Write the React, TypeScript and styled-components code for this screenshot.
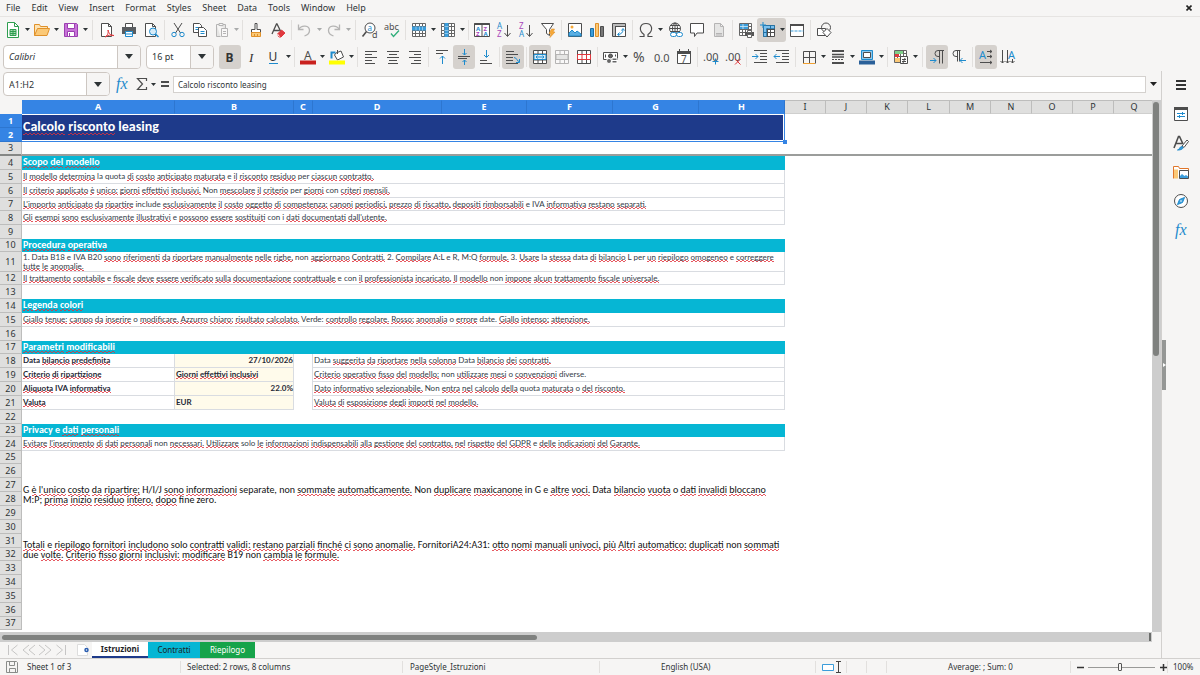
import React, { ReactNode } from "react";
import styled, { createGlobalStyle, css } from "styled-components";

const ui = '"Noto Sans", "Open Sans", sans-serif';
const cellFont = 'Lato, "Open Sans", sans-serif';
const noteFont = 'Carlito, Calibri, Lato, sans-serif';
const K = "#4d4d4d";
const B = "#1e8bcd";
const chrome = "#f6f5f4";

const Global = createGlobalStyle`
  * { box-sizing: border-box; }
  body { margin: 0; background: ${chrome}; color: #2e3436; font-family: ${ui}; font-size: 8px; }
  button, input, select { font: inherit; color: inherit; margin: 0; padding: 0; border: 0; background: none; }
`;

const Window_ = styled.div`display: flex; flex-direction: column; min-height: 100vh;`;

/* ---------- menu ---------- */
const MenuBar = styled.nav`
  display: flex; align-items: center; gap: 11px; height: 17px; padding: 0 6px;
  border-bottom: 1px solid #e6e4e2; font-size: 9px; line-height: 16px;
`;
const CloseDoc = styled.button`margin-left: auto; width: 10px; height: 16px; display: grid; place-items: center;`;

/* ---------- toolbars ---------- */
const Toolbar = styled.div<{ $inset: number }>`display: flex; align-items: center; height: 27px; padding: 0 2px 2px ${p => p.$inset}px;`;
const Tool = styled.button<{ $on?: boolean; $off?: boolean; $split?: boolean }>`
  display: flex; align-items: center; justify-content: flex-start; flex: none;
  width: ${p => (p.$split ? 29 : 22)}px; height: 24px; padding-left: 3px; border-radius: 3px;
  ${p => p.$on && css`background: #d5d1cd;`}
  ${p => p.$off && css`opacity: .38;`}
`;
const Sep = styled.i<{ $wide?: boolean }>`flex: none; width: ${p => (p.$wide ? 7 : 5)}px; height: 20px;
  background: linear-gradient(#e2e0de, #e2e0de) center / 1px 100% no-repeat;`;
const Caret = styled.svg<{ $flush?: boolean }>`flex: none; width: 5px; height: 3px; margin-left: ${p => (p.$flush ? 0 : 4)}px;`;
const Svg = styled.svg`flex: none; width: 16px; height: 16px; fill: none; stroke: ${K}; stroke-width: 1; overflow: visible;
  text { stroke: none; font-family: ${ui}; }`;

const Combo = styled.label<{ $w: number; $italic?: boolean }>`
  display: grid; grid-template-columns: 1fr 23px; flex: none; width: ${p => p.$w}px; height: 24px;
  border: 1px solid #cdc7c2; border-radius: 4px; background: #fff; overflow: hidden;
  select { grid-area: 1 / 1 / 2 / 3; appearance: none; padding-left: 5px; font-size: 9px; outline: 0;
    font-style: ${p => (p.$italic ? "italic" : "normal")}; }
  span { grid-area: 1 / 2; display: grid; place-items: center; background: ${chrome};
    border-left: 1px solid #cdc7c2; pointer-events: none; }
`;
const ComboGap = styled.i`flex: none; width: 5px;`;

const Body = styled.div`display: flex; flex: 1;`;
const Main = styled.main`flex: 1; min-width: 0; display: flex; flex-direction: column;`;

const FormulaBar = styled.div`display: flex; align-items: center; height: 29px; padding: 0 1px 3px 3px;`;
const FormulaTool = styled.button<{ $w: number }>`width: ${p => p.$w}px; height: 20px; display: grid; place-items: center; flex: none;`;
const FormulaInput = styled.input`
  flex: 1; min-width: 0; height: 17px; border: 1px solid #d4d1ce; background: #fff; padding: 0 4px; outline: 0;
`;

/* ---------- sheet ---------- */
const SheetPane = styled.div`display: flex; flex: 1;`;
const SheetArea = styled.div`flex: 1; min-width: 0; background: #fff; overflow: hidden;`;
const Sheet = styled.table`
  width: calc(100% + 3px); table-layout: fixed; border-collapse: separate; border-spacing: 0; font-size: 8px;
`;
const Corner = styled.td`padding: 0; background: ${chrome};`;
const ColHead = styled.th<{ $on?: boolean }>`
  height: 14px; padding: 0; font-size: 9px; line-height: 12px; font-weight: ${p => (p.$on ? 700 : 400)};
  color: ${p => (p.$on ? "#fff" : "#2e3436")}; background: ${p => (p.$on ? "#3584e4" : "#dfdfde")};
  border-right: 1px solid ${p => (p.$on ? "#2d76d0" : "#bdbdbc")};
  border-top: 1px solid ${p => (p.$on ? "#3584e4" : "#bdbdbc")};
  border-bottom: 1px solid ${p => (p.$on ? "#3584e4" : "#cfcfce")};
`;
const Row = styled.tr<{ $h: number }>`height: ${p => p.$h}px;`;
const RowHead = styled.th<{ $on?: boolean; $frozen?: boolean }>`
  padding: 0; font-size: 9px; line-height: 10px; font-weight: ${p => (p.$on ? 700 : 400)};
  color: ${p => (p.$on ? "#fff" : "#2e3436")}; background: ${p => (p.$on ? "#3584e4" : "#dfdfde")};
  border-right: 1px solid ${p => (p.$on ? "#3584e4" : "#bdbdbc")};
  border-bottom: ${p => (p.$frozen ? "2px solid #858785" : p.$on ? "1px solid #2d76d0" : "1px solid #bdbdbc")};
`;
const Cell = styled.td<{ $kind?: string }>`
  padding: 0 1px; vertical-align: top; line-height: 12px; font-family: ${cellFont}; white-space: nowrap; color: #333c48;
  ${p => p.$kind === "frozen" && css`border-bottom: 2px solid #9b9d9b;`}
  ${p => p.$kind === "section" && css`background: #06b6d4; color: #fff; font-weight: 700; font-family: ${noteFont}; font-size: 10px;`}
  ${p => p.$kind === "text" && css`border-bottom: 1px solid #d9dce1; border-right: 1px solid #d9dce1;`}
  ${p => p.$kind === "wrap" && css`border-bottom: 1px solid #d9dce1; border-right: 1px solid #d9dce1; white-space: normal; line-height: 9px; padding-top: 1px;`}
  ${p => p.$kind === "label" && css`border-bottom: 1px solid #d9dce1; border-right: 1px solid #d9dce1; font-weight: 700; color: #1f2937;`}
  ${p => (p.$kind === "value" || p.$kind === "number") && css`border-bottom: 1px solid #d9dce1; border-right: 1px solid #d9dce1; font-weight: 700; background: #fffbeb; color: #1f2937;`}
  ${p => p.$kind === "number" && css`text-align: right; padding-right: 0;`}
  ${p => p.$kind === "gap" && css`border-right: 1px solid #d9dce1;`}
  ${p => p.$kind === "note" && css`font-family: ${noteFont}; font-size: 10px; line-height: 10px; white-space: normal; vertical-align: bottom; padding-bottom: 1px; color: #111;`}
`;
const TitleCell = styled.td`
  position: relative; padding: 0 1px 2px; vertical-align: middle; background: #1e3a8a; color: #fff;
  font: 700 14px/18px ${noteFont};
  box-shadow: inset 0 -1px #3584e4, inset -1px 0 #3584e4, inset 0 -2px #fff, inset -2px 0 #fff, inset 0 1px #fff;
  &::after { content: ""; position: absolute; right: -2px; bottom: -2px; width: 4px; height: 4px; background: #3584e4; }
`;
/* Two staggered rows of dashes make a low zigzag under each flagged word. */
const Misspelt = styled.span`
  background:
    linear-gradient(90deg, #e0303acc 2px, transparent 2px) 0 100% / 4px 1px repeat-x,
    linear-gradient(90deg, transparent 2px, #e0303acc 2px) 0 calc(100% - 1px) / 4px 1px repeat-x;
`;

const VScroll = styled.div`flex: none; width: 9px; background: #cdcdcd; padding: 2px 2px 0 1px;
  i { display: block; height: 48%; border-radius: 3px; background: #7f817f; }`;
const HScroll = styled.div`display: flex; align-items: center; height: 10px; margin-right: 9px; background: #cdcdcd; padding: 0 1px 0 2px;
  i { width: 46.6%; height: 5px; border-radius: 3px; background: #7f817f; }
  b { width: 2px; height: 8px; margin-left: auto; background: #6b6d6b; }`;

/* ---------- tabs ---------- */
const Tabs = styled.div`display: flex; height: 16px;`;
const TabNav = styled.div`display: flex; align-items: center; width: 74px; padding-left: 5px; opacity: .28;
  button { height: 16px; display: grid; }`;
const AddSheet = styled.button`display: grid; place-items: center; width: 18px;`;
const Tab = styled.button<{ $bg: string; $w: number; $ink?: string; $active?: boolean }>`
  width: ${p => p.$w}px; background: ${p => p.$bg}; color: ${p => p.$ink || "#1d2226"}; line-height: 14px; padding-bottom: 1px;
  ${p => p.$active && css`font-weight: 700; border-bottom: 2px solid #1e3a8a; padding-bottom: 0;`}
`;

/* ---------- sidebar ---------- */
const Sidebar = styled.aside`flex: none; display: flex; width: 39px; border-left: 1px solid #d2d0ce;`;
const Grip = styled.button`align-self: center; width: 4px; height: 50px; background: #959795; display: grid; place-items: center;`;
const Deck = styled.div`display: flex; flex-direction: column; gap: 5px; padding: 2px 0 0 3px;
  button { width: 24px; height: 24px; display: grid; place-items: center; }`;

/* ---------- status ---------- */
const Status = styled.footer`display: grid; align-items: center; height: 17px; border-top: 1px solid #d2d0ce;
  grid-template-columns:
    minmax(0, 181fr) minmax(0, 222fr) minmax(0, 197fr) minmax(0, 216fr) minmax(0, 31fr)
    minmax(0, 20fr) minmax(0, 20fr) minmax(0, 184fr) minmax(0, 97fr) minmax(0, 32fr);`;
const Field = styled.div<{ $pad?: number; $center?: boolean }>`
  display: flex; align-items: center; height: 12px; line-height: 12px; white-space: nowrap; border-right: 1px solid #e2e0de;
  padding-left: ${p => p.$pad || 0}px; ${p => p.$center && css`justify-content: center; padding: 0 0 0 4px;`}
  &:last-child { border: 0; }
`;
const SheetCount = styled.span`margin-left: 7px;`;
const Zoom = styled.input`
  appearance: none; flex: 1; min-width: 0; height: 9px; margin: 0 4px; outline: 0;
  background: linear-gradient(#9a9a98, #9a9a98) center / 100% 1px no-repeat;
  &::-webkit-slider-thumb { appearance: none; width: 4px; height: 8px; border: 1px solid #555; background: ${chrome}; border-radius: 1px; }
`;
const ZoomButton = styled.button`width: 8px; height: 12px; display: grid; place-items: center;`;

/* ---------- icons ---------- */
const grid = (x: number, y: number, w: number, h: number, c = 4, r = 4) => {
  let d = `M${x} ${y}h${w}v${h}h${-w}z`;
  for (let i = 1; i < c; i++) d += `M${Math.round(x + (w * i) / c - 0.5) + 0.5} ${y}v${h}`;
  for (let i = 1; i < r; i++) d += `M${x} ${Math.round(y + (h * i) / r - 0.5) + 0.5}h${w}`;
  return d;
};
const aligned = (a: number[][]) => a.map(([x, w], i) => `M${x} ${2.5 + i * 3}h${w}`).join("");

const art: Record<string, ReactNode> = {
  newdoc: <><path d="M2.5.5h7l4 4v11h-11z" stroke="#2e9e4f" fill="#fff" /><path d="M9.5.5v4h4" stroke="#2e9e4f" /><path d="M5 7.5h6v6H5zM5 9.5h6M5 11.5h6M8 7.5v6" stroke="#2e9e4f" fill="#a8dcb5" /></>,
  open: <><path d="M.5 13.5v-11h5l1 2h7v3" stroke="#e0912a" fill="#fde3b4" /><path d="M.5 13.5l3-7h12l-2.500 7z" stroke="#e0912a" fill="#fbc977" /></>,
  save: <><path d="M1.500 1.500h12l1 1v12h-13z" stroke="#9b3fb0" fill="#c873d8" /><path d="M4.500 1.500h7v5h-7z" fill="#fff" stroke="#9b3fb0" /><path d="M4.500 14.500v-5h7v5z" fill="#fff" stroke="#9b3fb0" /><path d="M6.500 11v3" stroke="#9b3fb0" /></>,
  pdf: <><path d="M2.500 1.500h7l3 3v10h-10z" fill="#fff" /><path d="M9.500 1.500v3h3" /><path d="M6 15c3-2 3.500-4 3-7 1 4 3 6 6 5.500-3-1-6-.5-9 1.500z" stroke="#e0393e" /></>,
  print: <><path d="M4.500 5V1.500h7V5" fill="#fff" /><path d="M1 5h14v7H1z" fill="#5a5d60" stroke="none" /><path d="M4.500 9.500h7v5h-7z" fill="#fff" stroke={B} /><path d="M5 12h6" stroke={B} /></>,
  preview: <><path d="M2.500 1.500h7l3 3v10h-10z" fill="#fff" /><path d="M9.500 1.500v3h3" /><circle cx="10" cy="9.500" r="3.500" stroke={B} fill="#d6ebf8" /><path d="M12.500 12l3 3" stroke={B} strokeWidth="1.500" /></>,
  cut: <><path d="M4 1l6.500 10M12 1L5.500 11" /><circle cx="4" cy="12.500" r="2.200" stroke={B} /><circle cx="12" cy="12.500" r="2.200" stroke={B} /></>,
  copy: <><path d="M1.500 1.500h6l2 2v7h-8z" fill="#fff" /><path d="M3.500 5.500h4M3.500 7.500h3" stroke={B} /><path d="M6.500 5.500h5l3 3v6h-8z" fill="#fff" /><path d="M8.500 9.500h4M8.500 11.500h4" stroke={B} /></>,
  paste: <><path d="M2.500 2.500h9v4M2.500 2.500v12h4" fill="#ccc" /><path d="M5 1.500h4v2H5zM7.500 6.500h6v8h-6z" fill="#fff" /><path d="M9 9.500h3M9 11.500h3" /></>,
  clone: <><path d="M7 1.500h2v6h3.500v3h-9v-3H7z" fill="#fff" /><path d="M3.500 10.500h9v4h-9z" fill="#fbc977" stroke="#e0912a" /><path d="M6.500 12v2.500M9.500 12v2.500" stroke="#e0912a" /></>,
  clear: <><path d="M2 12L6.500 2h.5l4 8M3.500 8.500h6" strokeWidth="1.300" /><path d="M7.500 12l4-4 3.500 3-4 4h-2z" fill="#e0393e" stroke="#e0393e" /><path d="M7.500 12l2 2.500" stroke="#fff" /></>,
  undo: <path d="M1.500 2.500v5h5M1.500 7.500c3-5 11-4.500 11 1 0 2.500-2 4.500-5 5.500" strokeWidth="1.300" />,
  redo: <path d="M13.500 2.500v5h-5M13.500 7.500c-3-5-11-4.500-11 1 0 2.500 2 4.500 5 5.500" strokeWidth="1.300" />,
  find: <><circle cx="8" cy="6" r="5" fill="#fff" /><path d="M4.500 9.500L.5 14.500" strokeWidth="1.600" /><text x="5.500" y="8.500" fontSize="8" fill={B}>a</text><text x="10" y="15.500" fontSize="9" fill={K}>d</text></>,
  spell: <><text x="0" y="7.500" fontSize="9" fill={K}>abc</text><path d="M7 11.500l2.500 3 5.500-6" stroke="#2fae7a" strokeWidth="1.300" /></>,
  row: <><path d={grid(1.5, 1.5, 13, 13)} fill="#fff" stroke="#666" /><path d="M1 4.500h14v4H1z" fill="#3b9ddb" stroke="none" /><path d="M5 4.500v4M8.500 4.500v4M11.500 4.500v4" stroke="#8dc7ec" /></>,
  column: <><path d={grid(1.5, 1.5, 13, 13)} fill="#fff" stroke="#666" /><path d="M4.500 1h4v14h-4z" fill="#3b9ddb" stroke="none" /><path d="M4.500 4.500h4M4.500 8.500h4M4.500 11.500h4" stroke="#8dc7ec" /></>,
  sort: <><path d="M.5 1.500h15v13H.500zM8 1.500v13" fill="#fff" /><path d="M.5 2h15" strokeWidth="2" /><text x="2" y="8.500" fontSize="6" fontWeight="700" fill={B}>A</text><text x="2" y="14" fontSize="6" fontWeight="700" fill="#a846b9">Z</text><text x="9.500" y="8.500" fontSize="6" fontWeight="700" fill="#a846b9">Z</text><text x="9.500" y="14" fontSize="6" fontWeight="700" fill={B}>A</text></>,
  asc: <><text x="1" y="7" fontSize="8" fill={B}>A</text><text x="1" y="15" fontSize="8" fill="#a846b9">Z</text><path d="M11.500 3v11M8.500 11l3 3.500 3-3.500" /></>,
  desc: <><text x="1" y="7" fontSize="8" fill="#a846b9">Z</text><text x="1" y="15" fontSize="8" fill={B}>A</text><path d="M11.500 3v11M8.500 11l3 3.500 3-3.500" /></>,
  filter: <><path d="M1.500 1.500h12l-4 6v6l-3-2v-4z" fill="#fff" /><path d="M11.500 7h3l-1.500 3h2l-5 5.500 1-4H9z" fill="#f6a938" stroke="#e0912a" strokeWidth=".6" /></>,
  image: <><path d="M1.500 1.500h13v13h-13z" fill="#fff" /><path d="M2 14v-3l3-3 3 3 2-2 4 3v2z" fill="#5aaee2" stroke={B} /><circle cx="5" cy="5" r="1.500" fill="#f6a938" stroke="none" /></>,
  chart: <><path d="M1.500 6.500h3v8h-3z" fill="#3b9ddb" stroke="#1b6ea5" /><path d="M6.500 1.500h3v13h-3z" fill="#fbc977" stroke="#e0912a" /><path d="M11.500 4.500h3v10h-3z" fill="#777" /></>,
  pivot: <><path d="M1.500 1.500h13v13h-13zM1.500 4.500h13M4.500 1.500v13" fill="#fff" /><path d="M2 2h12v2H4v10H2z" fill="#bbb" stroke="none" /><path d="M7 12.500c3 0 5-2 5-5M10.500 8.500l1.500-2 1.500 2M8.500 10.500l-2 2 2 1.500" stroke={B} /></>,
  omega: <path d="M1.500 14.500h4.500v-2C0 8 2 1.500 8 1.500s8 6.500 2 11v2h4.500" strokeWidth="1.200" />,
  link: <><circle cx="8" cy="6.500" r="5.500" fill="#fff" /><path d="M2.500 6.500h11M8 1v10M3.500 3.500h9M3.500 9.500h9" /><ellipse cx="8" cy="6.500" rx="2.500" ry="5.500" /><rect x="3.500" y="10.500" width="6" height="4" rx="2" stroke={B} fill="#fff" /><rect x="9.500" y="10.500" width="6" height="4" rx="2" stroke={B} fill="#fff" /></>,
  comment: <path d="M1.500 1.500h13v9.500H8l-2.500 3.500V11h-4z" fill="#fff" />,
  page: <path d="M3.500 1.500h6l3 3v10h-9zM9.500 1.500v3h3M5 11.500h6M5 13h6" fill="#ccc" />,
  printarea: <><path d={grid(1.5, 1.5, 12, 12)} fill="#fff" stroke="#666" /><path d="M2 2h8v5H2z" fill="#3b9ddb" stroke="none" /><path d="M2 4.500h8M5 2v5" stroke="#d6ebf8" strokeWidth=".8" /><path d="M7 10h9v4H7z" fill="#555" stroke="none" /><path d="M9.500 8.500h4v2h-4zM9.500 12.500h4v3h-4z" fill="#fff" stroke="#666" /></>,
  freeze: <><path d={grid(3.5, 3.5, 11, 11, 3, 3)} fill="#fff" /><path d="M3.500 3.500h11v3h-8v8h-3z" fill="#7cc0ee" stroke="#1b6ea5" strokeWidth=".8" /><path d="M10.500 3.500v3M3.500 10.500h3" stroke="#1b6ea5" /><path d="M3 0v6M0 3h6" stroke={B} /></>,
  split: <><path d="M1.500 2.500h13v12h-13z" fill="#fff" /><path d="M1 3h14" strokeWidth="2" /><path d="M1.500 9h13" stroke="#3b9ddb" strokeDasharray="3 1" /></>,
  shapes: <><path d="M1.500 6.500h8v7h-8z" fill="#fff" /><circle cx="10" cy="5.500" r="4.500" /><path d="M11 6.500l4 4-4 4.500-4-4.500z" fill="#fff" /></>,
  bold: <text x="3.500" y="12.500" fontSize="12" fontWeight="700" fill="#333">B</text>,
  italic: <text x="5" y="12.500" fontSize="13" fontStyle="italic" fill="#333" style={{ fontFamily: "Liberation Serif" }}>I</text>,
  underline: <><text x="2.500" y="11.500" fontSize="12" fill="#333">U</text><path d="M3 14.500h9" stroke={B} /></>,
  color: <><text x="4" y="10.500" fontSize="12" fill={K}>A</text><path d="M0 13.500h16" stroke="#c9211e" strokeWidth="4" /></>,
  fill: <><path d="M7 4l5-2 2.500 6-6 3-3-5z" fill="#fff" /><path d="M8.500 1v4" /><path d="M2.500 9.500V3.500h4" stroke={B} strokeWidth="2" /><path d="M0 13.500h16" stroke="#ffff00" strokeWidth="4" /></>,
  left: <path d={aligned([[2, 12], [2, 7], [2, 12], [2, 7], [2, 10]])} />,
  center: <path d={aligned([[2, 12], [4, 8], [2, 12], [4, 8], [3, 10]])} />,
  right: <path d={aligned([[2, 12], [7, 7], [2, 12], [7, 7], [4, 10]])} />,
  top: <><path d="M2 1.500h12M2 4.500h7" /><path d="M8.500 15V7M6 9.500L8.500 7l2.500 2.500" stroke={B} /></>,
  middle: <><path d="M2 7.500h12M2 9.500h9" /><path d="M8.500 0v6M6.500 4l2 2 2-2M8.500 16v-5M6.500 13l2-2 2 2" stroke={B} /></>,
  bottom: <><path d="M2 11.500h7M2 14.500h12" /><path d="M8.500 1v7M6 6l2.500 2.500L11 6" stroke={B} /></>,
  wrap: <><path d="M1 2.500h8M1 5.500h12M1 8.500h7M1 11.500h7M1 14.500h12" /><path d="M9 8.500c3 0 3 4 5 4M14.500 10v3.500H11" stroke={B} /></>,
  merge: <><path d="M1.500 1.500h13v13h-13zM6 1.500v4M10.500 1.500v4M6 11v3.500M10.500 11v3.500M1.500 5h13M1.500 11h13" fill="#fff" /><path d="M2 5.500h12v5H2z" fill="#d6ebf8" stroke={B} /><path d="M4 8h8M5.500 6.500L4 8l1.500 1.500M10.500 6.500L12 8l-1.500 1.500" stroke={B} /></>,
  mergecells: <><path d="M1.500 1.500h13v13h-13zM6 1.500v4M10.500 1.500v4M6 11v3.500M10.500 11v3.500" fill="#fff" /><path d="M2 5.500h12v5H2z" fill="#ccc" /></>,
  splitcells: <><path d="M1.500 1.500h13v13h-13zM6 1.500v4M10.500 1.500v4M6 11v3.500M10.500 11v3.500" fill="#fff" /><path d="M1.500 5.500h13v5h-13zM6 5.500v5M10.500 5.500v5" stroke="#e0393e" /></>,
  currency: <><path d="M.5 3.500h14v7H.5z" fill="#fff" /><circle cx="7.500" cy="7" r="2" fill="#666" /><path d="M2.500 5.500v3M12.500 5.500v2" /><ellipse cx="6" cy="12" rx="2.500" ry="2.500" fill="#666" stroke="#fff" /><path d="M9 9h5v5H9z" fill="#666" stroke="#fff" /><path d="M9 11.500h5" stroke="#fff" /></>,
  percent: <text x="1" y="13" fontSize="14" fill={K}>%</text>,
  number: <text x="0" y="12.500" fontSize="11" fill={K}>0.0</text>,
  date: <><path d="M1.500 2.500h13v12h-13z" fill="#fff" /><path d="M1 3.500h14" strokeWidth="3" /><path d="M3.500 0v3M12.500 0v3" /><text x="5" y="13.500" fontSize="10" fill={K}>7</text></>,
  adddec: <><text x="0" y="12" fontSize="11" fill={K}>.00</text><path d="M12.500 9.500v6M9.500 12.500h6" stroke={B} /></>,
  deldec: <><text x="0" y="12" fontSize="11" fill={K}>.00</text><path d="M10 10l5.500 5.500M15.500 10L10 15.500" stroke="#e0393e" /></>,
  indent: <><path d="M2 1.500h13M8 4.500h7M8 7.500h7M8 10.500h7M2 13.500h13" /><path d="M0 7.500h6M3.500 5L6 7.500 3.500 10" stroke={B} /></>,
  outdent: <><path d="M2 1.500h13M8 4.500h7M8 7.500h7M8 10.500h7M2 13.500h13" /><path d="M0 7.500h6M2.500 5L0 7.500 2.500 10" stroke={B} /></>,
  borders: <><path d="M2.500 2.500h12v12M2.500 14.500v-12M8.500 2.500v12M2.500 8.500h12" /><path d="M2 14.500h12" stroke="#f0a030" /></>,
  linestyle: <><path d="M2 2h12" strokeWidth="2" /><path d="M2 5.500h12M2 8h12" strokeWidth="1.500" /><path d="M2 10.500h12" strokeDasharray="2 1" /><path d="M2 14h12" strokeWidth="2" /></>,
  bordercolor: <><path d="M2.500 1.500h11v9h-11z" fill="#8dc7ec" stroke={B} /><path d="M4.500 3.500h7v5h-7z" fill="#fff" /><path d="M0 13.500h16" stroke="#2a6099" strokeWidth="4" /></>,
  conditional: <><path d={grid(1.5, 1.5, 12, 12)} fill="#fff" stroke="#666" /><path d="M2 2h8v3H2z" fill="#7fd08a" stroke="none" /><path d="M2 5h4v3H2z" fill="#e0393e" stroke="none" /><path d="M2 9h5v4H2z" fill="#fbc977" stroke="none" /><path d="M7.500 7.500h7v7h-7z" fill="#fff" /><path d="M9 10.500h4M9 12.500h4M12 9l-2 5" /></>,
  ltr: <><path d="M15 1.500H9a3 3 0 000 6h1.500M10.500 1.500v13M13.500 1.500v13" /><path d="M1 11.500h6M4.500 9L7 11.500 4.500 14" stroke={B} /></>,
  rtl: <><path d="M9.500 1.500H5a3 3 0 000 6h1.500M6.500 1.500v11M8.500 1.500v11" /><path d="M15 11.500H9M11.500 9L9 11.500l2.500 2.500" stroke={B} /></>,
  horizontal: <><text x="1" y="9.500" fontSize="11" fill={B}>A</text><path d="M9 2.500h5M9 7.500h5M2 13.500h12M12 1l2 1.500L12 4M12 6l2 1.500L12 9M12 12l2 1.500-2 1.500" /></>,
  vertical: <><text x="8" y="9.500" fontSize="11" fill={B}>A</text><path d="M2.500 1v13M7.500 1v13M12.500 10v4M.5 12l2 2 2-2M5.500 12l2 2 2-2M10.500 12l2 2 2-2" /></>,
  fx: <text x="2" y="12.500" fontSize="16" fontStyle="italic" fill={B} style={{ fontFamily: "Liberation Serif" }}>fx</text>,
  sigma: <path d="M12.500 5V2.500h-9L8.500 8l-5 5.500h9V11" strokeWidth="1.200" />,
  equals: <path d="M4 6h8M4 10h8" strokeWidth="2" />,
  hamburger: <path d="M3 4h10M3 8h10M3 12h10" strokeWidth="1.800" stroke="#333" />,
  properties: <><path d="M1.500 1.500h13v13h-13z" fill="#fff" /><path d="M1 2.500h14" strokeWidth="3" /><path d="M4 7.500h8M4 10.500h8M9.500 6v3M6.500 9v3" stroke={B} /></>,
  styles: <><path d="M1 13L5.500 1.500h1L10 9M3 8.500h6" strokeWidth="1.600" /><path d="M9 11l5-6 1.500 1.500L11 12.500z" fill="#fff" /><path d="M4.500 15c2 0 2-3.500 4.500-3.500 2 1 1 3.500-4.500 3.500z" fill="#3b9ddb" stroke={B} /></>,
  gallery: <><path d="M.5 14.500v-12h5l1 2h9v3" stroke="#e0762a" fill="#fff" /><path d="M1 14.500v-9h4v9z" fill="#fbc977" stroke="none" /><path d="M6.500 6.500h9v8h-9z" fill="#fff" /><path d="M7 14v-2l2-2 2.500 2 1.500-1 2 1.500V14z" fill="#3b9ddb" stroke="none" /></>,
  navigator: <><circle cx="8" cy="8" r="6.500" fill="#fff" /><path d="M11.500 4.500L9.500 9.500l-5 2 2-5z" fill="#3b9ddb" stroke={B} /><circle cx="8" cy="8" r=".8" fill="#fff" stroke="none" /></>,
  floppy: <path d="M2.500 2.500h10l1 1v10h-11zM5.500 2.500v4h5v-4M5.500 13.500v-4h6v4" stroke="#8a8c8a" />,
};

const Icon = ({ n }: { n: string }) => <Svg viewBox="0 0 16 16" aria-hidden="true">{art[n]}</Svg>;
const Down = ({ flush }: { flush?: boolean }) => <Caret $flush={flush} viewBox="0 0 5 3" aria-hidden="true"><path d="M0 0h5L2.500 3z" fill="#2e3436" /></Caret>;

type ToolItem = { n: string; split?: boolean; on?: boolean; off?: boolean };
type Item = string | ToolItem;
const s = (n: string, o = {}): ToolItem => ({ n, split: true, ...o });
/* "|" is a divider, "||" a divider with more room around it. */
const standard: Item[] = [
  s("newdoc"), s("open"), s("save"), "||", "pdf", "print", "preview", "|", "cut", "copy", s("paste", { off: true }), "|",
  "clone", "clear", "|", s("undo", { off: true }), s("redo", { off: true }), "||", "find", "spell", "|", s("row"), s("column"), "|",
  "sort", "asc", "desc", "filter", "|", "image", "chart", "pivot", "|", s("omega"), "link", "comment", { n: "page", off: true }, "|",
  "printarea", s("freeze", { on: true }), "split", "|", "shapes",
];
const formatting: Item[] = [
  { n: "bold", on: true }, "italic", s("underline"), "|", s("color"), s("fill"), "|", "left", "center", "right", "|",
  "top", { n: "middle", on: true }, "bottom", "|", { n: "wrap", on: true }, "|", { n: "merge", on: true }, { n: "mergecells", off: true }, "splitcells", "|",
  s("currency"), "percent", "number", "date", "|", "adddec", "deldec", "|", "indent", "outdent", "|",
  s("borders"), s("linestyle"), s("bordercolor"), "|", s("conditional"), "||", { n: "ltr", on: true }, "rtl", "|", { n: "horizontal", on: true }, "vertical",
];
const Tools = ({ items }: { items: Item[] }) => <>{items.map((it, i) => {
  if (it === "|" || it === "||") return <Sep key={i} $wide={it === "||"} />;
  const t: ToolItem = typeof it === "string" ? { n: it } : it;
  return <Tool key={i} type="button" aria-label={t.n} $on={t.on} $off={t.off} $split={t.split}><Icon n={t.n} />{t.split && <Down />}</Tool>;
})}</>;

const Drop = ({ w, label, value, italic }: { w: number; label: string; value: string; italic?: boolean }) => (
  <Combo $w={w} $italic={italic}>
    <select aria-label={label} defaultValue={value}><option>{value}</option></select>
    <span><svg width="8" height="5" viewBox="0 0 8 5"><path d="M0 0h8L4 5z" fill="#2e3436" /></svg></span>
  </Combo>
);

/* Square brackets enclose runs of words the spell checker flags. */
const spell = (t: string) => t.split(/(\[[^\]]*\])/).filter(Boolean).map((part, i) =>
  part[0] === "["
    ? part.slice(1, -1).split(" ").map((w, j) => <React.Fragment key={i + "." + j}>{j > 0 && " "}<Misspelt>{w}</Misspelt></React.Fragment>)
    : part);

type R = { h: number; kind?: string; t?: string; label?: string; value?: string; num?: boolean; note?: string; covered?: boolean };
const rows: R[] = [
  { h: 14, kind: "title", t: "[Calcolo risconto] leasing" },
  { h: 14, covered: true },
  { h: 14, kind: "frozen" },
  { h: 14, kind: "section", t: "[Scopo del modello]" },
  { h: 14, kind: "text", t: "[Il modello determina] la quota [di costo anticipato maturata] e [il risconto residuo] per [ciascun contratto.]" },
  { h: 14, kind: "text", t: "[Il criterio applicato è unico: giorni effettivi inclusivi.] Non [mescolare il criterio] per [giorni] con [criteri mensili.]" },
  { h: 13, kind: "text", t: "[L'importo anticipato da ripartire] include [esclusivamente il costo oggetto di competenza: canoni periodici, prezzo di riscatto, depositi rimborsabili] e IVA [informativa restano separati.]" },
  { h: 14, kind: "text", t: "[Gli esempi sono esclusivamente illustrativi] e [possono essere sostituiti] con i [dati documentati dall'utente.]" },
  { h: 14 },
  { h: 13, kind: "section", t: "[Procedura operativa]" },
  { h: 19, kind: "wrap", t: "1. Data B18 e IVA B20 [sono riferimenti da riportare manualmente nelle righe,] non [aggiornano Contratti.] 2. [Compilare] A:L e R, M:Q [formule.] 3. [Usare] la [stessa] data [di bilancio] L per [un riepilogo omogeneo] e [correggere tutte le anomalie.]" },
  { h: 13, kind: "text", t: "[Il trattamento contabile] e [fiscale deve essere verificato sulla documentazione contrattuale] e con [il professionista incaricato.] [Il modello] non [impone alcun trattamento fiscale universale.]" },
  { h: 14 },
  { h: 14, kind: "section", t: "[Legenda colori]" },
  { h: 14, kind: "text", t: "[Giallo tenue: campo da inserire] o [modificare.] [Azzurro chiaro: risultato calcolato.] Verde: [controllo regolare.] [Rosso: anomalia] o [errore] date. [Giallo intenso: attenzione.]" },
  { h: 14 },
  { h: 13, kind: "section", t: "[Parametri modificabili]" },
  { h: 14, label: "Data [bilancio predefinita]", value: "27/10/2026", num: true, t: "Data [suggerita da riportare nella colonna] Data [bilancio dei contratti.]" },
  { h: 14, label: "[Criterio di ripartizione]", value: "[Giorni effettivi inclusivi]", t: "[Criterio operativo fisso del modello;] non [utilizzare mesi] o [convenzioni] diverse." },
  { h: 14, label: "[Aliquota] IVA [informativa]", value: "22.0%", num: true, t: "[Dato informativo selezionabile.] Non [entra nel calcolo della] quota [maturata] o [del risconto.]" },
  { h: 14, label: "[Valuta]", value: "EUR", t: "[Valuta di esposizione degli importi nel modello.]" },
  { h: 14 },
  { h: 13, kind: "section", t: "Privacy e [dati personali]" },
  { h: 14, kind: "text", t: "[Evitare l'inserimento di dati personali] non [necessari.] [Utilizzare] solo [le informazioni indispensabili alla gestione del contratto, nel rispetto del GDPR] e [delle indicazioni del Garante.]" },
  { h: 13 }, { h: 14 },
  { h: 14, note: "G [è l'unico costo da ripartire;] H/I/J [sono informazioni] separate, non [sommate automaticamente.] Non [duplicare maxicanone] in G e [altre voci.] Data [bilancio vuota] o [dati invalidi bloccano] M:P; [prima inizio residuo intero, dopo] fine zero." },
  { h: 14, covered: true },
  { h: 14 }, { h: 14 },
  { h: 14, note: "[Totali] e [riepilogo fornitori includono] solo [contratti validi: restano parziali finché ci sono anomalie.] FornitoriA24:A31: [otto nomi manuali univoci, più Altri automatico: duplicati] non [sommati] due [volte.] [Criterio fisso giorni inclusivi: modificare] B19 non [cambia le formule.]" },
  { h: 13, covered: true },
  { h: 14 }, { h: 14 }, { h: 14 }, { h: 14 }, { h: 13 },
];
const cols = [22, 153, 119, 19, 129, 85, 86, 86, 86, 41, 41, 41, 42, 41, 41, 41, 41];

const Cells = ({ r }: { r: R }) => {
  if (r.covered) return <Cell colSpan={9} />;
  if (r.kind === "title") return <><TitleCell colSpan={8} rowSpan={2}>{spell(r.t!)}</TitleCell><Cell colSpan={9} /></>;
  if (r.note) return <><Cell $kind="note" colSpan={8} rowSpan={2}>{spell(r.note)}</Cell><Cell colSpan={9} /></>;
  if (r.label) return <>
    <Cell $kind="label">{spell(r.label)}</Cell>
    <Cell $kind={r.num ? "number" : "value"}>{spell(r.value!)}</Cell>
    <Cell $kind="gap" />
    <Cell $kind="text" colSpan={5}>{spell(r.t!)}</Cell>
    <Cell colSpan={9} />
  </>;
  if (r.t) return <><Cell $kind={r.kind} colSpan={8}>{spell(r.t)}</Cell><Cell colSpan={9} /></>;
  return <Cell $kind={r.kind} colSpan={17} />;
};

export default function App() {
  return (
    <Window_>
      <Global />
      <MenuBar>
        {["File", "Edit", "View", "Insert", "Format", "Styles", "Sheet", "Data", "Tools", "Window", "Help"].map(m => <button type="button" key={m}>{m}</button>)}
        <CloseDoc type="button" aria-label="Close document"><svg width="6" height="6" viewBox="0 0 6 6"><path d="M.5.5l5 5M5.500.5l-5 5" stroke="#222" strokeWidth="1.600" /></svg></CloseDoc>
      </MenuBar>
      <Toolbar $inset={2}><Tools items={standard} /></Toolbar>
      <Toolbar $inset={3}>
        <Drop w={138} label="Font name" value="Calibri" italic />
        <ComboGap />
        <Drop w={68} label="Font size" value="16 pt" />
        <ComboGap />
        <Tools items={formatting} />
      </Toolbar>
      <Body>
        <Main>
          <FormulaBar>
            <Drop w={107} label="Name box" value="A1:H2" />
            <FormulaTool type="button" $w={24} aria-label="Function wizard"><Icon n="fx" /></FormulaTool>
            <FormulaTool type="button" $w={16} aria-label="Select function"><Icon n="sigma" /></FormulaTool>
            <FormulaTool type="button" $w={7} aria-label="Function list"><Down flush /></FormulaTool>
            <FormulaTool type="button" $w={16} aria-label="Formula"><Icon n="equals" /></FormulaTool>
            <FormulaInput aria-label="Input line" defaultValue="Calcolo risconto leasing" />
            <FormulaTool type="button" $w={14} aria-label="Expand formula bar"><svg width="7" height="4" viewBox="0 0 7 4"><path d="M0 0h7L3.500 4z" fill="#222" /></svg></FormulaTool>
          </FormulaBar>
          <SheetPane>
            <SheetArea>
              <Sheet>
                <colgroup>{cols.map((w, i) => <col key={i} width={w} />)}<col /></colgroup>
                <thead>
                  <tr><Corner />{"ABCDEFGHIJKLMNOPQ".split("").map((c, i) => <ColHead key={c} scope="col" $on={i < 8}>{c}</ColHead>)}</tr>
                </thead>
                <tbody>
                  {rows.map((r, i) => (
                    <Row key={i} $h={r.h}>
                      <RowHead scope="row" $on={i < 2} $frozen={r.kind === "frozen"}>{i + 1}</RowHead>
                      <Cells r={r} />
                    </Row>
                  ))}
                </tbody>
              </Sheet>
            </SheetArea>
            <VScroll><i /></VScroll>
          </SheetPane>
          <HScroll><i /><b /></HScroll>
          <Tabs>
            <TabNav>
              {["M3.500 3v10M12.500 3l-6 5 6 5", "M8 3L2 8l6 5M14 3L8 8l6 5", "M2 3l6 5-6 5M8 3l6 5-6 5", "M12.500 3v10M3.500 3l6 5-6 5"].map((d, i) => (
                <button type="button" key={i} aria-label={["First sheet", "Previous sheet", "Next sheet", "Last sheet"][i]}><Svg viewBox="0 0 16 16"><path d={d} /></Svg></button>
              ))}
            </TabNav>
            <AddSheet type="button" aria-label="Add sheet"><svg width="12" height="12" viewBox="0 0 12 12"><path d="M.5.5h7l3 3v8H.5z" fill="#fff" stroke="#ddd" /><circle cx="9.500" cy="6" r="1.500" fill="#fff" stroke="#2a5db0" strokeWidth="1.500" /></svg></AddSheet>
            <Tab type="button" $bg="#fff" $w={56} $active>Istruzioni</Tab>
            <Tab type="button" $bg="#06b6d4" $w={52}>Contratti</Tab>
            <Tab type="button" $bg="#16a34a" $w={55} $ink="#fff">Riepilogo</Tab>
          </Tabs>
        </Main>
        <Sidebar>
          <Grip type="button" aria-label="Collapse sidebar"><svg width="3" height="4" viewBox="0 0 3 4"><path d="M0 0l3 2-3 2z" fill="#fff" /></svg></Grip>
          <Deck>
            {["hamburger", "properties", "styles", "gallery", "navigator", "fx"].map(n => <button type="button" key={n} aria-label={n}><Icon n={n} /></button>)}
          </Deck>
        </Sidebar>
      </Body>
      <Status>
        <Field $pad={4}><Icon n="floppy" /><SheetCount>Sheet 1 of 3</SheetCount></Field>
        <Field $pad={6}>Selected: 2 rows, 8 columns</Field>
        <Field $pad={7}>PageStyle_Istruzioni</Field>
        <Field $pad={61}>English (USA)</Field>
        <Field $pad={6}><svg width="20" height="12" viewBox="0 0 20 12" fill="none"><path d="M.5 3.500h11v6H.500z" stroke="#3b9ddb" fill="#fff" /><path d="M14 .5h5M14 11.500h5M16.500.5v11" stroke="#444" /></svg></Field>
        <Field />
        <Field />
        <Field $center>Average: ; Sum: 0</Field>
        <Field $pad={5}>
          <ZoomButton type="button" aria-label="Zoom out"><svg width="7" height="7" viewBox="0 0 7 7"><path d="M0 3.500h7" stroke="#333" strokeWidth="1.500" /></svg></ZoomButton>
          <Zoom type="range" min={0} max={100} defaultValue={48} aria-label="Zoom" />
          <ZoomButton type="button" aria-label="Zoom in"><svg width="7" height="7" viewBox="0 0 7 7"><path d="M0 3.500h7M3.500 0v7" stroke="#333" strokeWidth="1.500" /></svg></ZoomButton>
        </Field>
        <Field $pad={5}>100%</Field>
      </Status>
    </Window_>
  );
}
